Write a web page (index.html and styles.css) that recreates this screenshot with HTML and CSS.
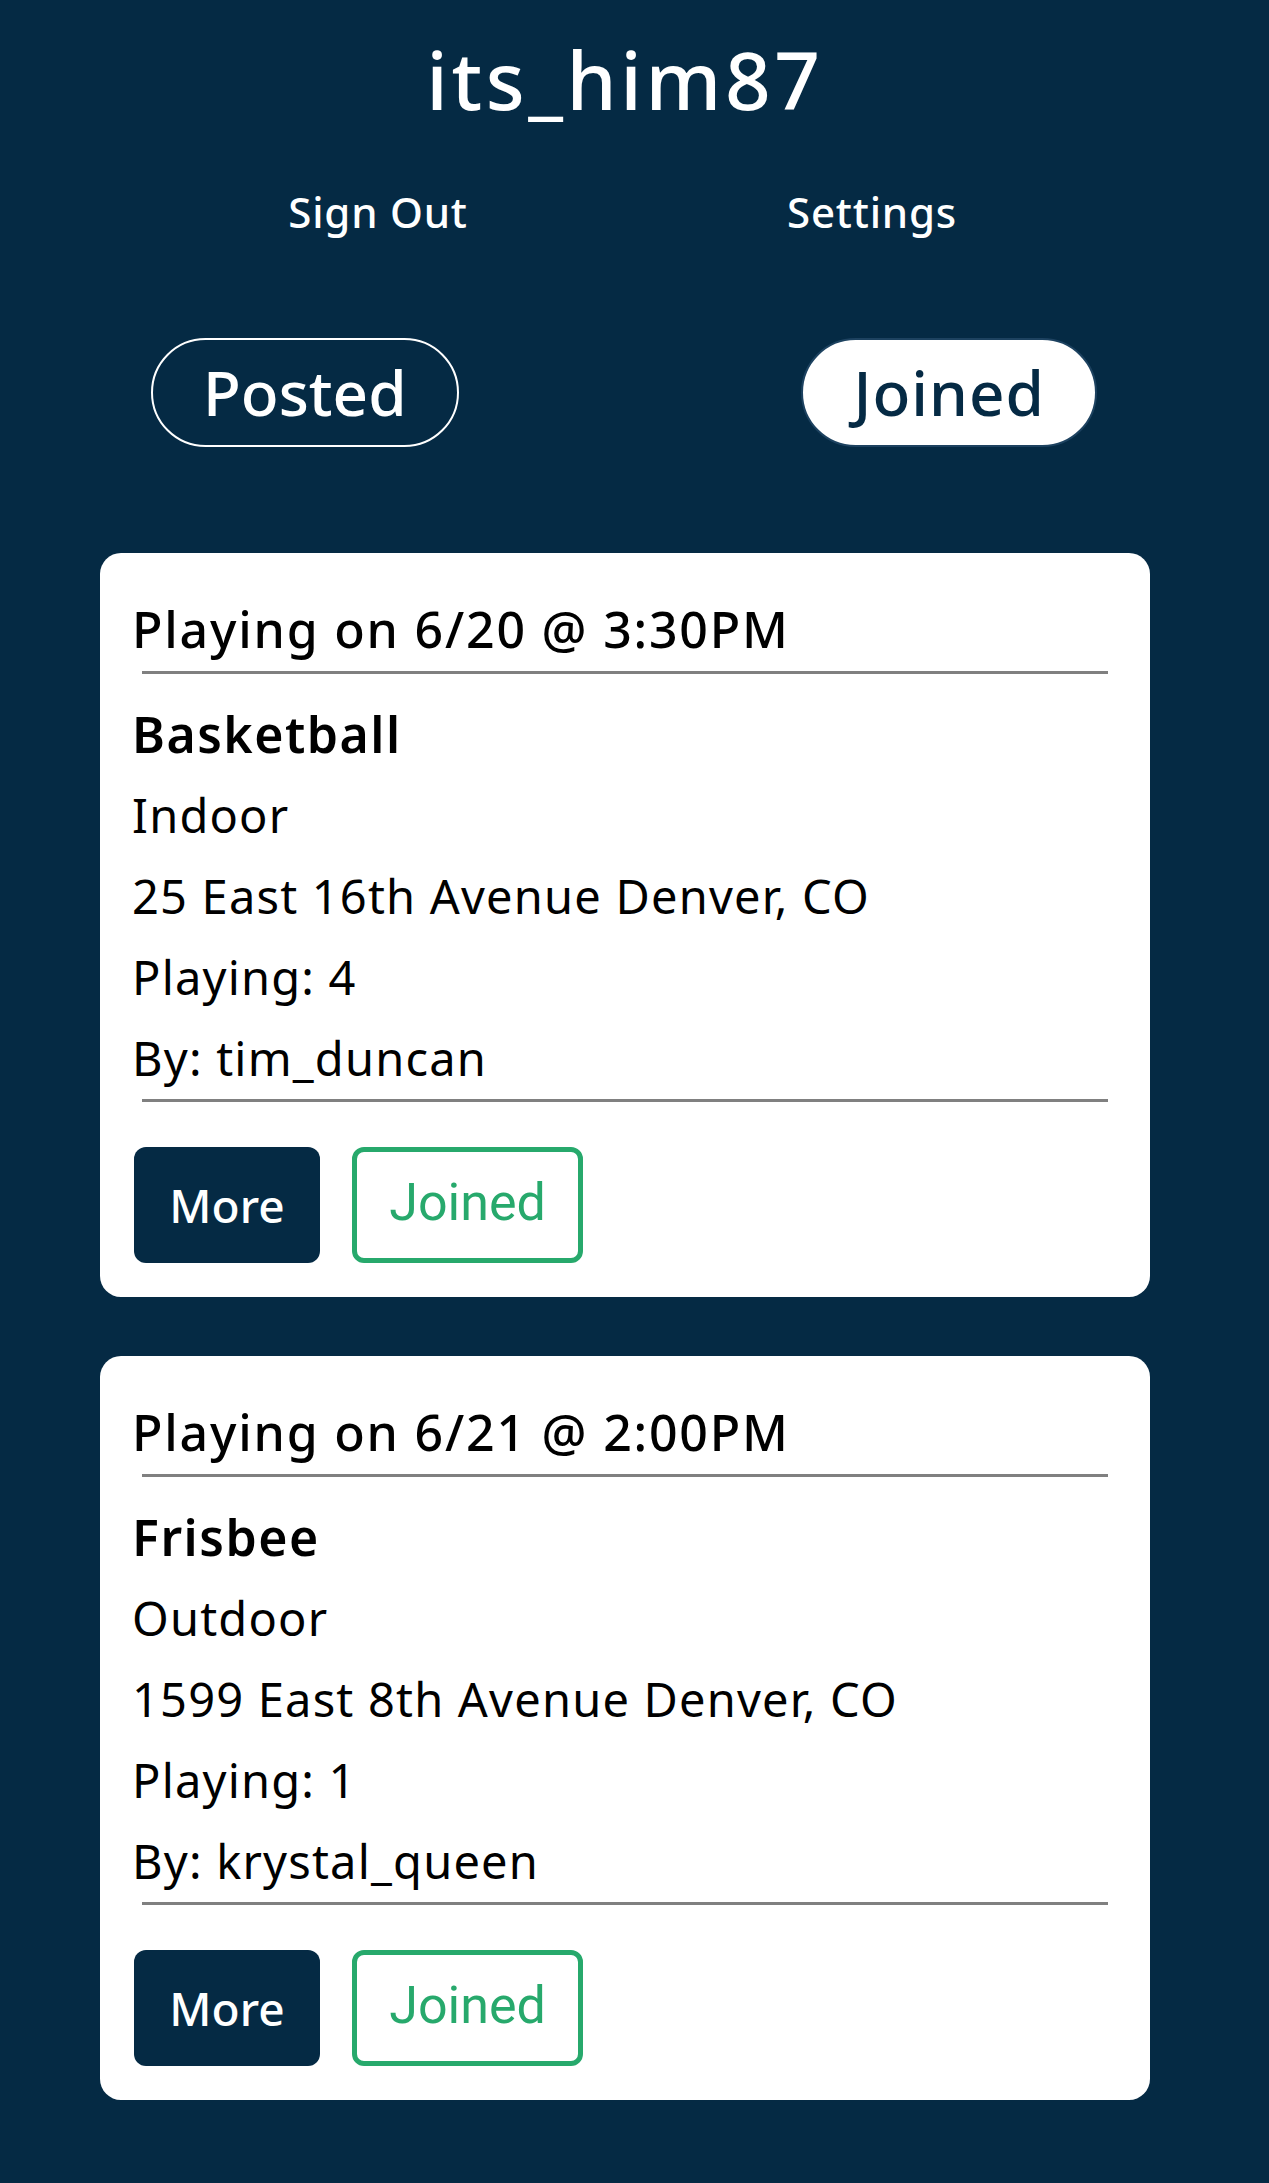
FILE: index.html
```html
<!DOCTYPE html>
<html lang="en">
<head>
<meta charset="utf-8">
<title>its_him87</title>
<link rel="stylesheet" href="styles.css">
</head>
<body>
<div class="page">
  <header class="header">
    <h1 class="username">its_him87</h1>
    <nav class="nav">
      <a class="nav-link">Sign Out</a>
      <a class="nav-link">Settings</a>
    </nav>
    <div class="tabs">
      <button class="tab">Posted</button>
      <button class="tab tab-active">Joined</button>
    </div>
  </header>

  <main class="list">
    <section class="card">
      <h2 class="card-title">Playing on 6/20 @ 3:30PM</h2>
      <hr class="rule">
      <h3 class="sport">Basketball</h3>
      <p class="line">Indoor</p>
      <p class="line">25 East 16th Avenue Denver, CO</p>
      <p class="line">Playing: 4</p>
      <p class="line">By: tim_duncan</p>
      <hr class="rule rule-bottom">
      <div class="actions">
        <button class="btn-more">More</button>
        <button class="btn-joined">Joined</button>
      </div>
    </section>

    <section class="card">
      <h2 class="card-title">Playing on 6/21 @ 2:00PM</h2>
      <hr class="rule">
      <h3 class="sport">Frisbee</h3>
      <p class="line">Outdoor</p>
      <p class="line">1599 East 8th Avenue Denver, CO</p>
      <p class="line">Playing: 1</p>
      <p class="line">By: krystal_queen</p>
      <hr class="rule rule-bottom">
      <div class="actions">
        <button class="btn-more">More</button>
        <button class="btn-joined">Joined</button>
      </div>
    </section>
  </main>
</div>
</body>
</html>
```

FILE: styles.css
```css
* { box-sizing: border-box; }

html, body {
  margin: 0;
  padding: 0;
  background: #052a44;
}

body {
  font-family: "Noto Sans", "Open Sans", sans-serif;
  color: #000;
}

.page {
  width: 1250px;
  padding: 34px 0 80px 0;
}

.header {
  display: flex;
  flex-direction: column;
}

.username {
  margin: 0;
  text-align: center;
  color: #fff;
  font-size: 80px;
  font-weight: 500;
  line-height: 90px;
  letter-spacing: 3.6px;
}

.nav {
  display: grid;
  grid-template-columns: 1fr 1fr;
  padding: 0 131px;
  margin-top: 58px;
}

.nav-link {
  text-align: center;
  color: #fff;
  font-size: 42px;
  font-weight: 500;
  line-height: 60px;
  letter-spacing: 0.8px;
  cursor: pointer;
}

.tabs {
  display: flex;
  justify-content: space-between;
  padding: 0 153px 0 151px;
  margin-top: 96px;
}

.tab {
  font-family: "Noto Sans", "Open Sans", sans-serif;
  font-size: 62px;
  font-weight: 500;
  line-height: 105px;
  padding: 0 50px;
  border-radius: 60px;
  border: 2px solid #fff;
  background: transparent;
  color: #fff;
  cursor: pointer;
}

.tab-active {
  background: #fff;
  color: #052a44;
  border-color: #1d4260;
  padding: 0 50px;
  letter-spacing: 1px;
}

.list {
  display: flex;
  flex-direction: column;
  align-items: center;
  gap: 59px;
  margin-top: 106px;
}

.card {
  width: 1050px;
  background: #fff;
  border-radius: 21px;
  padding: 34px 34px 34px 32px;
}

.card-title {
  margin: 12px 0 0 0;
  font-size: 50px;
  font-weight: 500;
  line-height: 60px;
  letter-spacing: 1.8px;
}

.rule {
  border: none;
  height: 3px;
  background: #808080;
  margin: 12px 8px 0 10px;
}

.rule-bottom {
  margin-top: 0;
}

.sport {
  margin: 20px 0 0 0;
  font-size: 50px;
  font-weight: 600;
  line-height: 81px;
  letter-spacing: 1.5px;
}

.line {
  margin: 0;
  font-size: 47px;
  font-weight: 400;
  line-height: 81px;
  letter-spacing: 1.2px;
}

.actions {
  display: flex;
  gap: 32px;
  margin-top: 45px;
  padding-left: 2px;
}

.btn-more {
  width: 186px;
  height: 116px;
  border: none;
  border-radius: 12px;
  background: #052a44;
  color: #fff;
  font-family: "Noto Sans", "Open Sans", sans-serif;
  font-size: 46px;
  font-weight: 500;
  padding: 0;
  cursor: pointer;
}

.btn-joined {
  width: 231px;
  height: 116px;
  border: 5px solid #27a96c;
  border-radius: 12px;
  background: #fff;
  color: #27a96c;
  font-family: Roboto, "Noto Sans", sans-serif;
  font-size: 52px;
  font-weight: 400;
  padding: 0 0 6px 0;
  cursor: pointer;
}
```
